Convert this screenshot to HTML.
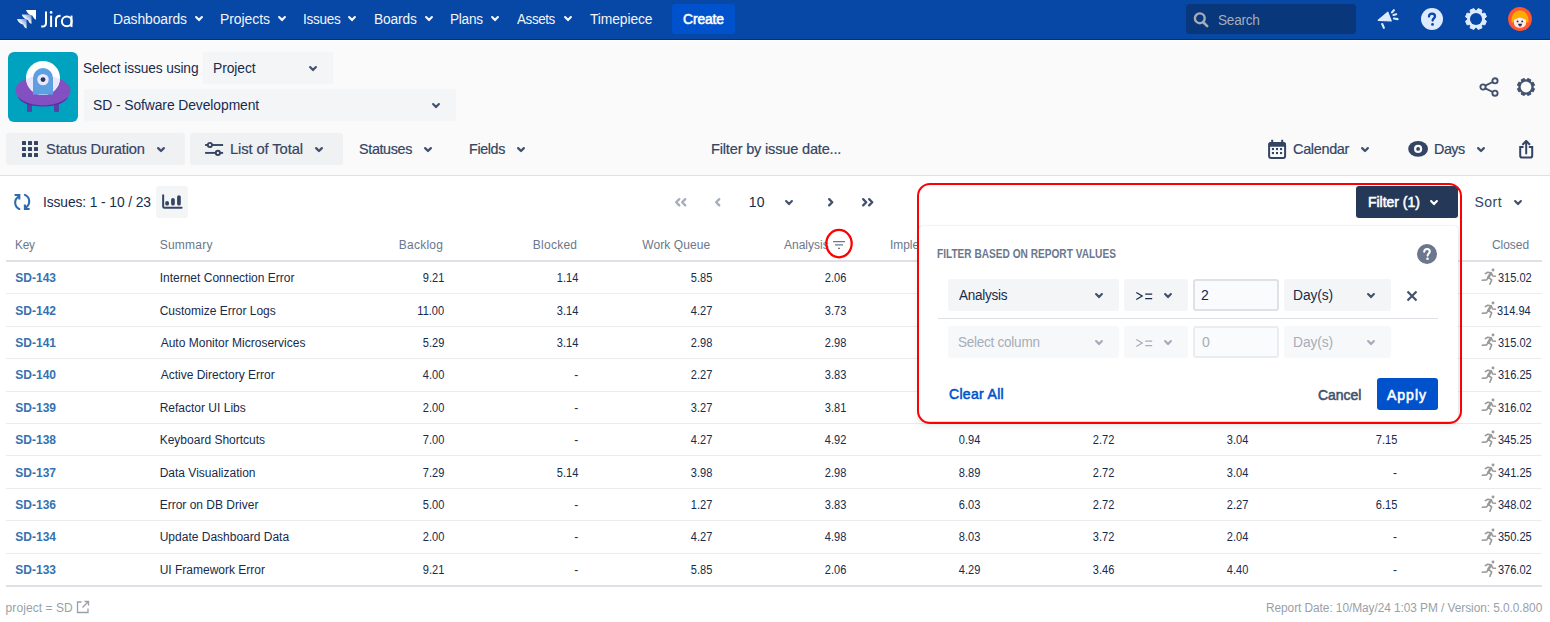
<!DOCTYPE html>
<html><head><meta charset="utf-8"><title>Jira - Status Duration</title>
<style>
html,body{margin:0;padding:0;width:1550px;height:622px;overflow:hidden;background:#fff;font-family:"Liberation Sans",sans-serif;}
.t{position:absolute;line-height:1;white-space:pre;font-family:"Liberation Sans",sans-serif;}
svg{display:block;overflow:visible}
</style></head><body>
<div style="position:absolute;left:0px;top:0px;width:1550px;height:622px;background:#FFFFFF;border-radius:0px;"></div>
<div style="position:absolute;left:0px;top:41px;width:1550px;height:134px;background:#FAFAFA;border-radius:0px;"></div>
<div style="position:absolute;left:0px;top:175px;width:1550px;height:1px;background:#DFE1E6;border-radius:0px;"></div>
<div style="position:absolute;left:0px;top:0px;width:1550px;height:39px;background:#0747A6;border-radius:0px;"></div>
<div style="position:absolute;left:0px;top:39px;width:1550px;height:1px;background:#1E2E4D;border-radius:0px;"></div>
<svg style="position:absolute;left:14px;top:6px;" width="26" height="26" viewBox="0 0 26 26"><defs><linearGradient id="jg" x1="0" y1="1" x2="1" y2="0"><stop offset="0.45" stop-color="#fff"/><stop offset="0.9" stop-color="#fff" stop-opacity="0.45"/></linearGradient></defs>
<path d="M12 4 H22 V13.8 C20.2 13 19 11.5 18.3 9.6 C15.8 9.2 13.2 7.4 12 4 Z" fill="#fff"/>
<path d="M7.7 8.6 H17.5 V18 C15.8 17.3 14.6 15.8 14 14 C11.5 13.6 8.9 11.9 7.7 8.6 Z" fill="url(#jg)"/>
<path d="M3 13 H12.6 V22.6 C10.9 21.9 9.7 20.4 9.1 18.5 C6.6 18.1 4.1 16.3 3 13 Z" fill="url(#jg)"/></svg>
<svg style="position:absolute;left:38px;top:8px;" width="38" height="22" viewBox="0 0 38 22"><g fill="none" stroke="#FFFFFF" stroke-width="2"><path d="M8 3.6 V14.8 C8 17.5 6.5 18.6 4.6 18.6 H3.2"/><path d="M13.1 7.6 V19"/><path d="M18 19 V11.6 C18 8.9 19.6 7.7 22.6 7.7"/><circle cx="28.8" cy="13.3" r="4.9"/><path d="M33.5 7.6 V19"/></g><circle cx="13.1" cy="4.4" r="1.35" fill="#FFFFFF"/></svg>
<div class="t" style="left:112.50px;top:12.10px;font-size:14px;color:#F4F5F7;transform-origin:1px 0;transform:scaleX(0.9899);letter-spacing:-0.084px;">Dashboards</div>
<svg style="position:absolute;left:194px;top:14.9px;" width="10" height="7.2" viewBox="0 0 10 7.2"><path d="M2.10 2.10 L5.00 5.10 L7.90 2.10" fill="none" stroke="#F4F5F7" stroke-width="2.2" stroke-linecap="round" stroke-linejoin="round"/></svg>
<div class="t" style="left:219.60px;top:12.10px;font-size:14px;color:#F4F5F7;transform-origin:1px 0;transform:scaleX(0.9939);letter-spacing:-0.043px;">Projects</div>
<svg style="position:absolute;left:276.8px;top:14.9px;" width="10" height="7.2" viewBox="0 0 10 7.2"><path d="M2.10 2.10 L5.00 5.10 L7.90 2.10" fill="none" stroke="#F4F5F7" stroke-width="2.2" stroke-linecap="round" stroke-linejoin="round"/></svg>
<div class="t" style="left:302.60px;top:12.10px;font-size:14px;color:#F4F5F7;transform-origin:1px 0;transform:scaleX(0.9667);letter-spacing:-0.269px;">Issues</div>
<svg style="position:absolute;left:347px;top:14.9px;" width="10" height="7.2" viewBox="0 0 10 7.2"><path d="M2.10 2.10 L5.00 5.10 L7.90 2.10" fill="none" stroke="#F4F5F7" stroke-width="2.2" stroke-linecap="round" stroke-linejoin="round"/></svg>
<div class="t" style="left:373.60px;top:12.10px;font-size:14px;color:#F4F5F7;transform-origin:1px 0;transform:scaleX(0.9814);letter-spacing:-0.163px;">Boards</div>
<svg style="position:absolute;left:423.5px;top:14.9px;" width="10" height="7.2" viewBox="0 0 10 7.2"><path d="M2.10 2.10 L5.00 5.10 L7.90 2.10" fill="none" stroke="#F4F5F7" stroke-width="2.2" stroke-linecap="round" stroke-linejoin="round"/></svg>
<div class="t" style="left:450.00px;top:12.10px;font-size:14px;color:#F4F5F7;transform-origin:1px 0;transform:scaleX(0.9706);letter-spacing:-0.258px;">Plans</div>
<svg style="position:absolute;left:490px;top:14.9px;" width="10" height="7.2" viewBox="0 0 10 7.2"><path d="M2.10 2.10 L5.00 5.10 L7.90 2.10" fill="none" stroke="#F4F5F7" stroke-width="2.2" stroke-linecap="round" stroke-linejoin="round"/></svg>
<div class="t" style="left:516.70px;top:12.10px;font-size:14px;color:#F4F5F7;transform-origin:0px 0;transform:scaleX(0.9560);letter-spacing:-0.387px;">Assets</div>
<svg style="position:absolute;left:562.5px;top:14.9px;" width="10" height="7.2" viewBox="0 0 10 7.2"><path d="M2.10 2.10 L5.00 5.10 L7.90 2.10" fill="none" stroke="#F4F5F7" stroke-width="2.2" stroke-linecap="round" stroke-linejoin="round"/></svg>
<div class="t" style="left:590.00px;top:12.10px;font-size:14px;color:#F4F5F7;transform-origin:0px 0;transform:scaleX(0.9883);letter-spacing:-0.095px;">Timepiece</div>
<div style="position:absolute;left:672px;top:4px;width:63px;height:30px;background:#0052CC;border-radius:3px;"></div>
<div class="t" style="left:683.00px;top:12.10px;font-size:14px;color:#FFFFFF;transform-origin:1px 0;transform:scaleX(0.9878);letter-spacing:-0.101px;-webkit-text-stroke:0.55px #FFFFFF;">Create</div>
<div style="position:absolute;left:1186px;top:4px;width:170px;height:30px;background:#08377C;border-radius:4px;"></div>
<svg style="position:absolute;left:1193px;top:11.5px;" width="16" height="16" viewBox="0 0 16 16"><circle cx="6.8" cy="6.3" r="4.9" fill="none" stroke="#A5ADBA" stroke-width="2.4"/><path d="M10 10 L14.2 14.2" stroke="#A5ADBA" stroke-width="2.6" stroke-linecap="round"/></svg>
<div class="t" style="left:1217.50px;top:13.10px;font-size:14px;color:#A5ADBA;transform-origin:1px 0;transform:scaleX(0.9709);letter-spacing:-0.257px;">Search</div>
<svg style="position:absolute;left:1376px;top:8px;" width="24" height="22" viewBox="0 0 24 22"><path d="M2.3 12.3 L11.8 4.3 L15.2 12.9 Z" fill="#DEEBFF" stroke="#DEEBFF" stroke-width="1.3" stroke-linejoin="round"/><path d="M6.2 16 L7.9 19.9" stroke="#DEEBFF" stroke-width="2.1" stroke-linecap="round"/><path d="M16 4.4 L17.9 2.2 M17.4 7 L20.2 6.3 M17.9 10.5 L21.6 11.1" stroke="#DEEBFF" stroke-width="2.1" stroke-linecap="round"/></svg>
<svg style="position:absolute;left:1421px;top:8px;" width="22" height="22" viewBox="0 0 22 22"><circle cx="11" cy="11" r="11" fill="#DEEBFF"/><path d="M8 8.6 C8 6.8 9.3 5.6 11 5.6 C12.8 5.6 14 6.7 14 8.3 C14 10.2 11.6 10.5 11.6 12.6" fill="none" stroke="#0747A6" stroke-width="2.3" stroke-linecap="round"/><circle cx="11.5" cy="16.4" r="1.4" fill="#0747A6"/></svg>
<svg style="position:absolute;left:1465px;top:7.7px;" width="22" height="22" viewBox="0 0 22 22"><path d="M21.45 13.15 L19.91 16.87 L17.55 16.55 L16.55 17.55 L16.87 19.91 L13.15 21.45 L11.71 19.55 L10.29 19.55 L8.85 21.45 L5.13 19.91 L5.45 17.55 L4.45 16.55 L2.09 16.87 L0.55 13.15 L2.45 11.71 L2.45 10.29 L0.55 8.85 L2.09 5.13 L4.45 5.45 L5.45 4.45 L5.13 2.09 L8.85 0.55 L10.29 2.45 L11.71 2.45 L13.15 0.55 L16.87 2.09 L16.55 4.45 L17.55 5.45 L19.91 5.13 L21.45 8.85 L19.55 10.29 L19.55 11.71 Z" fill="#DEEBFF" stroke="#DEEBFF" stroke-width="1" stroke-linejoin="round"/><circle cx="11.0" cy="11.0" r="6.05" fill="#0747A6"/></svg>
<svg style="position:absolute;left:1508px;top:7px;" width="24" height="24" viewBox="0 0 24 24"><circle cx="12" cy="12" r="11.9" fill="#FF5630"/><path d="M3.6 15.5 C2.8 8 6.5 3.6 12 3.6 C17.5 3.6 21.2 8 20.4 15.5 Z" fill="#FFAB00"/><path d="M6 12.8 C7.5 11.4 10 11.6 12 10.6 C14 11.6 16.5 11.4 18 12.8 L18 16.5 C17.6 19.4 15.2 20.9 12 20.9 C8.8 20.9 6.4 19.4 6 16.5 Z" fill="#FFEBE6"/><circle cx="9.6" cy="14.4" r="0.95" fill="#172B4D"/><circle cx="14.2" cy="14.4" r="0.95" fill="#172B4D"/><path d="M10.1 16.7 H14 C13.8 18.6 13 19.4 12.05 19.4 C11.1 19.4 10.3 18.6 10.1 16.7 Z" fill="#172B4D"/><path d="M10.8 18.4 H13.3 C13 19.1 12.6 19.4 12.05 19.4 C11.5 19.4 11.1 19.1 10.8 18.4 Z" fill="#DE350B"/></svg>
<svg style="position:absolute;left:8px;top:52px" width="70" height="70" viewBox="0 0 70 70">
<defs><clipPath id="sc"><ellipse cx="35" cy="38.5" rx="27.5" ry="15"/></clipPath></defs>
<rect width="70" height="70" rx="6" fill="#00A3BF"/>
<rect x="19" y="47" width="5" height="13" rx="1" fill="#5243AA"/><rect x="46" y="47" width="5" height="13" rx="1" fill="#5243AA"/>
<ellipse cx="35" cy="44" rx="25" ry="10.5" fill="#5E2CA5"/>
<ellipse cx="35" cy="38.5" rx="27.5" ry="15" fill="#8350C2"/>
<circle cx="35" cy="26" r="17" fill="#FFFFFF"/>
<circle cx="35" cy="26" r="17" fill="#EAE6FF" clip-path="url(#sc)"/>
<path d="M25 42.6 V26 A10 10 0 0 1 45 26 V42.6 Z" fill="#5DA0E2"/>
<circle cx="35" cy="27.6" r="5.7" fill="#EAE6FF"/><circle cx="35" cy="27.6" r="2.4" fill="#253858"/>
</svg>
<div class="t" style="left:83.30px;top:61.10px;font-size:14px;color:#172B4D;transform-origin:1px 0;transform:scaleX(0.9818);letter-spacing:-0.122px;">Select issues using</div>
<div style="position:absolute;left:203px;top:52px;width:130px;height:32px;background:#F4F5F7;border-radius:3px;"></div>
<div class="t" style="left:213.00px;top:61.10px;font-size:14px;color:#172B4D;transform-origin:1px 0;transform:scaleX(0.9884);letter-spacing:-0.084px;">Project</div>
<svg style="position:absolute;left:308px;top:65px;" width="10" height="7.2" viewBox="0 0 10 7.2"><path d="M2.10 2.10 L5.00 5.10 L7.90 2.10" fill="none" stroke="#42526E" stroke-width="2.2" stroke-linecap="round" stroke-linejoin="round"/></svg>
<div style="position:absolute;left:84px;top:89px;width:372px;height:32px;background:#F4F5F7;border-radius:3px;"></div>
<div class="t" style="left:93.40px;top:98.10px;font-size:14px;color:#172B4D;transform-origin:1px 0;transform:scaleX(0.9899);letter-spacing:-0.075px;">SD - Sofware Development</div>
<svg style="position:absolute;left:431px;top:102px;" width="10" height="7.2" viewBox="0 0 10 7.2"><path d="M2.10 2.10 L5.00 5.10 L7.90 2.10" fill="none" stroke="#42526E" stroke-width="2.2" stroke-linecap="round" stroke-linejoin="round"/></svg>
<svg style="position:absolute;left:1479px;top:77px;" width="21" height="20" viewBox="0 0 21 20"><circle cx="4" cy="10" r="2.6" fill="none" stroke="#42526E" stroke-width="1.9"/><circle cx="16" cy="3.8" r="2.6" fill="none" stroke="#42526E" stroke-width="1.9"/><circle cx="16" cy="16.2" r="2.6" fill="none" stroke="#42526E" stroke-width="1.9"/><path d="M6.3 8.7 L13.7 5 M6.3 11.3 L13.7 15" stroke="#42526E" stroke-width="1.9"/></svg>
<svg style="position:absolute;left:1516.5px;top:77.5px;" width="18" height="18" viewBox="0 0 18 18"><path d="M17.55 10.76 L16.29 13.80 L14.36 13.54 L13.54 14.36 L13.80 16.29 L10.76 17.55 L9.58 16.00 L8.42 16.00 L7.24 17.55 L4.20 16.29 L4.46 14.36 L3.64 13.54 L1.71 13.80 L0.45 10.76 L2.00 9.58 L2.00 8.42 L0.45 7.24 L1.71 4.20 L3.64 4.46 L4.46 3.64 L4.20 1.71 L7.24 0.45 L8.42 2.00 L9.58 2.00 L10.76 0.45 L13.80 1.71 L13.54 3.64 L14.36 4.46 L16.29 4.20 L17.55 7.24 L16.00 8.42 L16.00 9.58 Z" fill="#42526E" stroke="#42526E" stroke-width="1" stroke-linejoin="round"/><circle cx="9.0" cy="9.0" r="5.40" fill="#FAFAFA"/></svg>
<div style="position:absolute;left:6px;top:133px;width:179px;height:32px;background:#F0F1F3;border-radius:3px;"></div>
<svg style="position:absolute;left:22px;top:141px;" width="16" height="16" viewBox="0 0 16 16"><rect x="0" y="0" width="4" height="4" rx="0.6" fill="#344563"/><rect x="0" y="6" width="4" height="4" rx="0.6" fill="#344563"/><rect x="0" y="12" width="4" height="4" rx="0.6" fill="#344563"/><rect x="6" y="0" width="4" height="4" rx="0.6" fill="#344563"/><rect x="6" y="6" width="4" height="4" rx="0.6" fill="#344563"/><rect x="6" y="12" width="4" height="4" rx="0.6" fill="#344563"/><rect x="12" y="0" width="4" height="4" rx="0.6" fill="#344563"/><rect x="12" y="6" width="4" height="4" rx="0.6" fill="#344563"/><rect x="12" y="12" width="4" height="4" rx="0.6" fill="#344563"/></svg>
<div class="t" style="left:45.50px;top:141.25px;font-size:15px;color:#344563;transform-origin:1px 0;transform:scaleX(0.9779);letter-spacing:-0.164px;-webkit-text-stroke:0.2px #344563;">Status Duration</div>
<svg style="position:absolute;left:156px;top:146px;" width="10" height="7.2" viewBox="0 0 10 7.2"><path d="M2.15 2.15 L5.00 5.05 L7.85 2.15" fill="none" stroke="#42526E" stroke-width="2.3" stroke-linecap="round" stroke-linejoin="round"/></svg>
<div style="position:absolute;left:190px;top:133px;width:153px;height:32px;background:#F0F1F3;border-radius:3px;"></div>
<svg style="position:absolute;left:204px;top:141px;" width="20" height="16" viewBox="0 0 20 16"><path d="M1.1 4 H19.1" stroke="#344563" stroke-width="1.9"/><circle cx="5.9" cy="4" r="2.1" fill="#F0F1F4" stroke="#344563" stroke-width="1.9"/><path d="M1.1 11.9 H19.1" stroke="#344563" stroke-width="1.9"/><circle cx="13.9" cy="11.9" r="2.1" fill="#F0F1F4" stroke="#344563" stroke-width="1.9"/></svg>
<div class="t" style="left:229.60px;top:141.25px;font-size:15px;color:#344563;transform-origin:1px 0;transform:scaleX(0.9824);letter-spacing:-0.110px;-webkit-text-stroke:0.2px #344563;">List of Total</div>
<svg style="position:absolute;left:314px;top:146px;" width="10" height="7.2" viewBox="0 0 10 7.2"><path d="M2.15 2.15 L5.00 5.05 L7.85 2.15" fill="none" stroke="#42526E" stroke-width="2.3" stroke-linecap="round" stroke-linejoin="round"/></svg>
<div class="t" style="left:359.00px;top:141.25px;font-size:15px;color:#344563;transform-origin:1px 0;transform:scaleX(0.9561);letter-spacing:-0.374px;-webkit-text-stroke:0.2px #344563;">Statuses</div>
<svg style="position:absolute;left:423px;top:146px;" width="10" height="7.2" viewBox="0 0 10 7.2"><path d="M2.15 2.15 L5.00 5.05 L7.85 2.15" fill="none" stroke="#42526E" stroke-width="2.3" stroke-linecap="round" stroke-linejoin="round"/></svg>
<div class="t" style="left:468.70px;top:141.25px;font-size:15px;color:#344563;transform-origin:1px 0;transform:scaleX(0.9526);letter-spacing:-0.388px;-webkit-text-stroke:0.2px #344563;">Fields</div>
<svg style="position:absolute;left:516px;top:146px;" width="10" height="7.2" viewBox="0 0 10 7.2"><path d="M2.15 2.15 L5.00 5.05 L7.85 2.15" fill="none" stroke="#42526E" stroke-width="2.3" stroke-linecap="round" stroke-linejoin="round"/></svg>
<div class="t" style="left:711.00px;top:141.25px;font-size:15px;color:#344563;transform-origin:1px 0;transform:scaleX(0.9706);letter-spacing:-0.187px;-webkit-text-stroke:0.2px #344563;">Filter by issue date...</div>
<svg style="position:absolute;left:1267px;top:139px;" width="20" height="20" viewBox="0 0 20 20"><rect x="2.1" y="4" width="16" height="15" rx="2" fill="none" stroke="#344563" stroke-width="2"/><rect x="1.5" y="3.2" width="17.2" height="4.6" rx="1.5" fill="#344563"/><rect x="4.2" y="0.8" width="2" height="4" fill="#344563"/><rect x="14.2" y="0.8" width="2" height="4" fill="#344563"/><rect x="4.90" y="9.00" width="2.1" height="2.1" fill="#344563"/><rect x="4.90" y="13.00" width="2.1" height="2.1" fill="#344563"/><rect x="8.95" y="9.00" width="2.1" height="2.1" fill="#344563"/><rect x="8.95" y="13.00" width="2.1" height="2.1" fill="#344563"/><rect x="13.00" y="9.00" width="2.1" height="2.1" fill="#344563"/><rect x="13.00" y="13.00" width="2.1" height="2.1" fill="#344563"/></svg>
<div class="t" style="left:1292.50px;top:141.25px;font-size:15px;color:#344563;transform-origin:1px 0;transform:scaleX(0.9625);letter-spacing:-0.334px;-webkit-text-stroke:0.2px #344563;">Calendar</div>
<svg style="position:absolute;left:1360px;top:146px;" width="10" height="7.2" viewBox="0 0 10 7.2"><path d="M2.15 2.15 L5.00 5.05 L7.85 2.15" fill="none" stroke="#42526E" stroke-width="2.3" stroke-linecap="round" stroke-linejoin="round"/></svg>
<svg style="position:absolute;left:1407px;top:140px;" width="22" height="18" viewBox="0 0 22 18"><ellipse cx="11.1" cy="8.9" rx="9.9" ry="7.85" fill="#344563"/><circle cx="11.1" cy="8.9" r="4.1" fill="#FAFAFA"/><circle cx="11.1" cy="8.9" r="1.9" fill="#344563"/></svg>
<div class="t" style="left:1434.00px;top:141.25px;font-size:15px;color:#344563;transform-origin:1px 0;transform:scaleX(0.9545);letter-spacing:-0.524px;-webkit-text-stroke:0.2px #344563;">Days</div>
<svg style="position:absolute;left:1476px;top:146px;" width="10" height="7.2" viewBox="0 0 10 7.2"><path d="M2.15 2.15 L5.00 5.05 L7.85 2.15" fill="none" stroke="#42526E" stroke-width="2.3" stroke-linecap="round" stroke-linejoin="round"/></svg>
<svg style="position:absolute;left:1518px;top:139px;" width="16" height="20" viewBox="0 0 16 20"><path d="M4.8 8 H2.2 V16.8 Q2.2 18.6 4 18.6 H12.4 Q14.2 18.6 14.2 16.8 V8 H11.6" fill="none" stroke="#344563" stroke-width="2" stroke-linecap="round"/><path d="M8.2 14.4 V2.4" stroke="#344563" stroke-width="2" stroke-linecap="round"/><path d="M5 5.3 L8.2 2 L11.4 5.3" fill="none" stroke="#344563" stroke-width="2" stroke-linecap="round" stroke-linejoin="round"/></svg>
<svg style="position:absolute;left:8px;top:188px;" width="30" height="28" viewBox="0 0 30 28"><path d="M11.3 21 A7 7 0 0 1 10.6 8.6" fill="none" stroke="#2D6AAE" stroke-width="2.1" stroke-linecap="round"/><path d="M6.6 7 H11.3 V11.4" fill="none" stroke="#2D6AAE" stroke-width="2.1"/><path d="M16.9 6.9 A7 7 0 0 1 17.4 19.6" fill="none" stroke="#2D6AAE" stroke-width="2.1" stroke-linecap="round"/><path d="M16.9 16.4 V21 H21.6" fill="none" stroke="#2D6AAE" stroke-width="2.1"/></svg>
<div class="t" style="left:42.60px;top:195.10px;font-size:14px;color:#172B4D;transform-origin:1px 0;transform:scaleX(0.9850);letter-spacing:-0.093px;">Issues: 1 - 10 / 23</div>
<div style="position:absolute;left:156px;top:186px;width:32px;height:32px;background:#F4F5F7;border-radius:3px;"></div>
<svg style="position:absolute;left:162px;top:194px;" width="21" height="16" viewBox="0 0 21 16"><path d="M1.15 1.3 V12.4 Q1.15 13.7 2.45 13.7 H19.6" fill="none" stroke="#344563" stroke-width="2" stroke-linecap="round"/><rect x="3.2" y="7" width="3.8" height="4.6" rx="1.9" fill="#344563"/><rect x="9.1" y="4" width="3.7" height="7.6" rx="1.85" fill="#344563"/><rect x="15.1" y="1.2" width="3.7" height="10.4" rx="1.85" fill="#344563"/></svg>
<svg style="position:absolute;left:673.7px;top:196.8px;" width="7.4" height="10.5" viewBox="0 0 7.4 10.5"><path d="M5.25 2.15 L2.15 5.25 L5.25 8.35" fill="none" stroke="#A5ADBA" stroke-width="2.3" stroke-linecap="round" stroke-linejoin="round"/></svg>
<svg style="position:absolute;left:679.9px;top:196.8px;" width="7.4" height="10.5" viewBox="0 0 7.4 10.5"><path d="M5.25 2.15 L2.15 5.25 L5.25 8.35" fill="none" stroke="#A5ADBA" stroke-width="2.3" stroke-linecap="round" stroke-linejoin="round"/></svg>
<svg style="position:absolute;left:714px;top:196.8px;" width="7.4" height="10.5" viewBox="0 0 7.4 10.5"><path d="M5.25 2.15 L2.15 5.25 L5.25 8.35" fill="none" stroke="#A5ADBA" stroke-width="2.3" stroke-linecap="round" stroke-linejoin="round"/></svg>
<div class="t" style="left:748.80px;top:195.10px;font-size:14px;color:#172B4D;letter-spacing:0.200px;">10</div>
<svg style="position:absolute;left:784px;top:199px;" width="10" height="7.2" viewBox="0 0 10 7.2"><path d="M2.10 2.10 L5.00 5.10 L7.90 2.10" fill="none" stroke="#42526E" stroke-width="2.2" stroke-linecap="round" stroke-linejoin="round"/></svg>
<svg style="position:absolute;left:826.8px;top:196.8px;" width="7.4" height="10.5" viewBox="0 0 7.4 10.5"><path d="M2.15 2.15 L5.25 5.25 L2.15 8.35" fill="none" stroke="#42526E" stroke-width="2.3" stroke-linecap="round" stroke-linejoin="round"/></svg>
<svg style="position:absolute;left:861px;top:196.8px;" width="7.4" height="10.5" viewBox="0 0 7.4 10.5"><path d="M2.15 2.15 L5.25 5.25 L2.15 8.35" fill="none" stroke="#42526E" stroke-width="2.3" stroke-linecap="round" stroke-linejoin="round"/></svg>
<svg style="position:absolute;left:867.2px;top:196.8px;" width="7.4" height="10.5" viewBox="0 0 7.4 10.5"><path d="M2.15 2.15 L5.25 5.25 L2.15 8.35" fill="none" stroke="#42526E" stroke-width="2.3" stroke-linecap="round" stroke-linejoin="round"/></svg>
<div style="position:absolute;left:1356px;top:186px;width:102px;height:32px;background:#253858;border-radius:3px;"></div>
<div class="t" style="left:1367.50px;top:195.10px;font-size:14px;color:#FFFFFF;transform-origin:1px 0;transform:scaleX(0.9980);letter-spacing:-0.011px;-webkit-text-stroke:0.55px #FFFFFF;">Filter (1)</div>
<svg style="position:absolute;left:1429px;top:199px;" width="10" height="7.2" viewBox="0 0 10 7.2"><path d="M2.10 2.10 L5.00 5.10 L7.90 2.10" fill="none" stroke="#FFFFFF" stroke-width="2.2" stroke-linecap="round" stroke-linejoin="round"/></svg>
<div class="t" style="left:1474.50px;top:195.10px;font-size:14px;color:#344563;letter-spacing:0.500px;">Sort</div>
<svg style="position:absolute;left:1513px;top:199px;" width="10" height="7.2" viewBox="0 0 10 7.2"><path d="M2.10 2.10 L5.00 5.10 L7.90 2.10" fill="none" stroke="#42526E" stroke-width="2.2" stroke-linecap="round" stroke-linejoin="round"/></svg>
<div style="position:absolute;left:6px;top:260px;width:1536px;height:2px;background:#DFE1E6;border-radius:0px;"></div>
<div class="t" style="left:15.30px;top:238.80px;font-size:12px;color:#6B778C;transform-origin:1px 0;transform:scaleX(0.9825);letter-spacing:-0.178px;">Key</div>
<div class="t" style="left:159.70px;top:238.80px;font-size:12px;color:#6B778C;letter-spacing:0.250px;">Summary</div>
<div class="t" style="left:398.80px;top:238.80px;font-size:12px;color:#6B778C;letter-spacing:0.233px;">Backlog</div>
<div class="t" style="left:532.80px;top:238.80px;font-size:12px;color:#6B778C;letter-spacing:0.250px;">Blocked</div>
<div class="t" style="left:642.30px;top:238.80px;font-size:12px;color:#6B778C;letter-spacing:0.078px;">Work Queue</div>
<div class="t" style="left:784.00px;top:238.80px;font-size:12px;color:#6B778C;">Analysis</div>
<div class="t" style="left:890.00px;top:238.80px;font-size:12px;color:#6B778C;transform-origin:1px 0;transform:scaleX(0.9938);letter-spacing:-0.039px;">Implementation</div>
<div class="t" style="left:1492.00px;top:238.80px;font-size:12px;color:#6B778C;transform-origin:1px 0;transform:scaleX(0.9958);letter-spacing:-0.030px;">Closed</div>
<svg style="position:absolute;left:832px;top:239px;" width="13" height="11" viewBox="0 0 13 11"><path d="M1 2.6 H13 M3 5.8 H11 M6 9.3 H8" stroke="#6B778C" stroke-width="1.3"/></svg>
<svg style="position:absolute;left:824px;top:229px;" width="30" height="30" viewBox="0 0 30 30"><ellipse cx="15" cy="14.6" rx="12.7" ry="13.7" fill="none" stroke="#FF0000" stroke-width="2.3"/></svg>
<div style="position:absolute;left:6px;top:293px;width:1536px;height:1px;background:#EBECF0;border-radius:0px;"></div>
<div class="t" style="left:15.30px;top:272.10px;font-size:12px;color:#3572B0;font-weight:700;">SD-143</div>
<div class="t" style="left:159.70px;top:272.10px;font-size:12px;color:#172B4D;">Internet Connection Error</div>
<div class="t" style="left:420.60px;top:272.10px;font-size:12px;color:#172B4D;transform-origin:100% 0;transform:scaleX(0.92);">9.21</div>
<div class="t" style="left:555.30px;top:272.10px;font-size:12px;color:#172B4D;transform-origin:100% 0;transform:scaleX(0.92);">1.14</div>
<div class="t" style="left:689.20px;top:272.10px;font-size:12px;color:#172B4D;transform-origin:100% 0;transform:scaleX(0.92);">5.85</div>
<div class="t" style="left:823.10px;top:272.10px;font-size:12px;color:#172B4D;transform-origin:100% 0;transform:scaleX(0.92);">2.06</div>
<div class="t" style="left:1495.20px;top:272.10px;font-size:12px;color:#172B4D;transform-origin:100% 0;transform:scaleX(0.92);">315.02</div>
<svg style="position:absolute;left:1476px;top:264px;" width="24" height="26" viewBox="0 0 24 26"><circle cx="17" cy="6" r="1.45" fill="#9A9A9A"/><path d="M9.3 9.6 L11.7 8.2 L15 8.8 M15.6 9.9 L16.8 12 L19.4 12.3 M12.3 13.5 L10.5 15.9 L6.3 16.3 M12.5 13.5 L15.7 15.9 L13.9 20.2" fill="none" stroke="#9A9A9A" stroke-width="1.6" stroke-linecap="round" stroke-linejoin="round"/><path d="M15 9.3 L12.3 13.4" stroke="#9A9A9A" stroke-width="2.6" stroke-linecap="round"/></svg>
<div style="position:absolute;left:6px;top:326px;width:1536px;height:1px;background:#EBECF0;border-radius:0px;"></div>
<div class="t" style="left:15.30px;top:304.50px;font-size:12px;color:#3572B0;font-weight:700;">SD-142</div>
<div class="t" style="left:159.70px;top:304.50px;font-size:12px;color:#172B4D;">Customize Error Logs</div>
<div class="t" style="left:414.60px;top:304.50px;font-size:12px;color:#172B4D;transform-origin:100% 0;transform:scaleX(0.92);">11.00</div>
<div class="t" style="left:555.30px;top:304.50px;font-size:12px;color:#172B4D;transform-origin:100% 0;transform:scaleX(0.92);">3.14</div>
<div class="t" style="left:689.20px;top:304.50px;font-size:12px;color:#172B4D;transform-origin:100% 0;transform:scaleX(0.92);">4.27</div>
<div class="t" style="left:823.10px;top:304.50px;font-size:12px;color:#172B4D;transform-origin:100% 0;transform:scaleX(0.92);">3.73</div>
<div class="t" style="left:1494.20px;top:304.50px;font-size:12px;color:#172B4D;transform-origin:100% 0;transform:scaleX(0.92);">314.94</div>
<svg style="position:absolute;left:1476px;top:297px;" width="24" height="26" viewBox="0 0 24 26"><circle cx="17" cy="6" r="1.45" fill="#9A9A9A"/><path d="M9.3 9.6 L11.7 8.2 L15 8.8 M15.6 9.9 L16.8 12 L19.4 12.3 M12.3 13.5 L10.5 15.9 L6.3 16.3 M12.5 13.5 L15.7 15.9 L13.9 20.2" fill="none" stroke="#9A9A9A" stroke-width="1.6" stroke-linecap="round" stroke-linejoin="round"/><path d="M15 9.3 L12.3 13.4" stroke="#9A9A9A" stroke-width="2.6" stroke-linecap="round"/></svg>
<div style="position:absolute;left:6px;top:358px;width:1536px;height:1px;background:#EBECF0;border-radius:0px;"></div>
<div class="t" style="left:15.30px;top:336.90px;font-size:12px;color:#3572B0;font-weight:700;">SD-141</div>
<div class="t" style="left:160.70px;top:336.90px;font-size:12px;color:#172B4D;">Auto Monitor Microservices</div>
<div class="t" style="left:420.60px;top:336.90px;font-size:12px;color:#172B4D;transform-origin:100% 0;transform:scaleX(0.92);">5.29</div>
<div class="t" style="left:555.30px;top:336.90px;font-size:12px;color:#172B4D;transform-origin:100% 0;transform:scaleX(0.92);">3.14</div>
<div class="t" style="left:689.20px;top:336.90px;font-size:12px;color:#172B4D;transform-origin:100% 0;transform:scaleX(0.92);">2.98</div>
<div class="t" style="left:823.10px;top:336.90px;font-size:12px;color:#172B4D;transform-origin:100% 0;transform:scaleX(0.92);">2.98</div>
<div class="t" style="left:1495.20px;top:336.90px;font-size:12px;color:#172B4D;transform-origin:100% 0;transform:scaleX(0.92);">315.02</div>
<svg style="position:absolute;left:1476px;top:329px;" width="24" height="26" viewBox="0 0 24 26"><circle cx="17" cy="6" r="1.45" fill="#9A9A9A"/><path d="M9.3 9.6 L11.7 8.2 L15 8.8 M15.6 9.9 L16.8 12 L19.4 12.3 M12.3 13.5 L10.5 15.9 L6.3 16.3 M12.5 13.5 L15.7 15.9 L13.9 20.2" fill="none" stroke="#9A9A9A" stroke-width="1.6" stroke-linecap="round" stroke-linejoin="round"/><path d="M15 9.3 L12.3 13.4" stroke="#9A9A9A" stroke-width="2.6" stroke-linecap="round"/></svg>
<div style="position:absolute;left:6px;top:391px;width:1536px;height:1px;background:#EBECF0;border-radius:0px;"></div>
<div class="t" style="left:15.30px;top:369.30px;font-size:12px;color:#3572B0;font-weight:700;">SD-140</div>
<div class="t" style="left:160.70px;top:369.30px;font-size:12px;color:#172B4D;">Active Directory Error</div>
<div class="t" style="left:420.60px;top:369.30px;font-size:12px;color:#172B4D;transform-origin:100% 0;transform:scaleX(0.92);">4.00</div>
<div class="t" style="left:574.30px;top:369.30px;font-size:12px;color:#172B4D;">-</div>
<div class="t" style="left:689.20px;top:369.30px;font-size:12px;color:#172B4D;transform-origin:100% 0;transform:scaleX(0.92);">2.27</div>
<div class="t" style="left:823.10px;top:369.30px;font-size:12px;color:#172B4D;transform-origin:100% 0;transform:scaleX(0.92);">3.83</div>
<div class="t" style="left:1495.20px;top:369.30px;font-size:12px;color:#172B4D;transform-origin:100% 0;transform:scaleX(0.92);">316.25</div>
<svg style="position:absolute;left:1476px;top:362px;" width="24" height="26" viewBox="0 0 24 26"><circle cx="17" cy="6" r="1.45" fill="#9A9A9A"/><path d="M9.3 9.6 L11.7 8.2 L15 8.8 M15.6 9.9 L16.8 12 L19.4 12.3 M12.3 13.5 L10.5 15.9 L6.3 16.3 M12.5 13.5 L15.7 15.9 L13.9 20.2" fill="none" stroke="#9A9A9A" stroke-width="1.6" stroke-linecap="round" stroke-linejoin="round"/><path d="M15 9.3 L12.3 13.4" stroke="#9A9A9A" stroke-width="2.6" stroke-linecap="round"/></svg>
<div style="position:absolute;left:6px;top:423px;width:1536px;height:1px;background:#EBECF0;border-radius:0px;"></div>
<div class="t" style="left:15.30px;top:401.70px;font-size:12px;color:#3572B0;font-weight:700;">SD-139</div>
<div class="t" style="left:159.70px;top:401.70px;font-size:12px;color:#172B4D;">Refactor UI Libs</div>
<div class="t" style="left:420.60px;top:401.70px;font-size:12px;color:#172B4D;transform-origin:100% 0;transform:scaleX(0.92);">2.00</div>
<div class="t" style="left:574.30px;top:401.70px;font-size:12px;color:#172B4D;">-</div>
<div class="t" style="left:689.20px;top:401.70px;font-size:12px;color:#172B4D;transform-origin:100% 0;transform:scaleX(0.92);">3.27</div>
<div class="t" style="left:823.10px;top:401.70px;font-size:12px;color:#172B4D;transform-origin:100% 0;transform:scaleX(0.92);">3.81</div>
<div class="t" style="left:1495.20px;top:401.70px;font-size:12px;color:#172B4D;transform-origin:100% 0;transform:scaleX(0.92);">316.02</div>
<svg style="position:absolute;left:1476px;top:394px;" width="24" height="26" viewBox="0 0 24 26"><circle cx="17" cy="6" r="1.45" fill="#9A9A9A"/><path d="M9.3 9.6 L11.7 8.2 L15 8.8 M15.6 9.9 L16.8 12 L19.4 12.3 M12.3 13.5 L10.5 15.9 L6.3 16.3 M12.5 13.5 L15.7 15.9 L13.9 20.2" fill="none" stroke="#9A9A9A" stroke-width="1.6" stroke-linecap="round" stroke-linejoin="round"/><path d="M15 9.3 L12.3 13.4" stroke="#9A9A9A" stroke-width="2.6" stroke-linecap="round"/></svg>
<div style="position:absolute;left:6px;top:455px;width:1536px;height:1px;background:#EBECF0;border-radius:0px;"></div>
<div class="t" style="left:15.30px;top:434.10px;font-size:12px;color:#3572B0;font-weight:700;">SD-138</div>
<div class="t" style="left:159.70px;top:434.10px;font-size:12px;color:#172B4D;">Keyboard Shortcuts</div>
<div class="t" style="left:420.60px;top:434.10px;font-size:12px;color:#172B4D;transform-origin:100% 0;transform:scaleX(0.92);">7.00</div>
<div class="t" style="left:574.30px;top:434.10px;font-size:12px;color:#172B4D;">-</div>
<div class="t" style="left:689.20px;top:434.10px;font-size:12px;color:#172B4D;transform-origin:100% 0;transform:scaleX(0.92);">4.27</div>
<div class="t" style="left:823.10px;top:434.10px;font-size:12px;color:#172B4D;transform-origin:100% 0;transform:scaleX(0.92);">4.92</div>
<div class="t" style="left:957.30px;top:434.10px;font-size:12px;color:#172B4D;transform-origin:100% 0;transform:scaleX(0.92);">0.94</div>
<div class="t" style="left:1090.80px;top:434.10px;font-size:12px;color:#172B4D;transform-origin:100% 0;transform:scaleX(0.92);">2.72</div>
<div class="t" style="left:1225.30px;top:434.10px;font-size:12px;color:#172B4D;transform-origin:100% 0;transform:scaleX(0.92);">3.04</div>
<div class="t" style="left:1373.90px;top:434.10px;font-size:12px;color:#172B4D;transform-origin:100% 0;transform:scaleX(0.92);">7.15</div>
<div class="t" style="left:1495.20px;top:434.10px;font-size:12px;color:#172B4D;transform-origin:100% 0;transform:scaleX(0.92);">345.25</div>
<svg style="position:absolute;left:1476px;top:426px;" width="24" height="26" viewBox="0 0 24 26"><circle cx="17" cy="6" r="1.45" fill="#9A9A9A"/><path d="M9.3 9.6 L11.7 8.2 L15 8.8 M15.6 9.9 L16.8 12 L19.4 12.3 M12.3 13.5 L10.5 15.9 L6.3 16.3 M12.5 13.5 L15.7 15.9 L13.9 20.2" fill="none" stroke="#9A9A9A" stroke-width="1.6" stroke-linecap="round" stroke-linejoin="round"/><path d="M15 9.3 L12.3 13.4" stroke="#9A9A9A" stroke-width="2.6" stroke-linecap="round"/></svg>
<div style="position:absolute;left:6px;top:488px;width:1536px;height:1px;background:#EBECF0;border-radius:0px;"></div>
<div class="t" style="left:15.30px;top:466.50px;font-size:12px;color:#3572B0;font-weight:700;">SD-137</div>
<div class="t" style="left:159.70px;top:466.50px;font-size:12px;color:#172B4D;">Data Visualization</div>
<div class="t" style="left:420.60px;top:466.50px;font-size:12px;color:#172B4D;transform-origin:100% 0;transform:scaleX(0.92);">7.29</div>
<div class="t" style="left:555.30px;top:466.50px;font-size:12px;color:#172B4D;transform-origin:100% 0;transform:scaleX(0.92);">5.14</div>
<div class="t" style="left:689.20px;top:466.50px;font-size:12px;color:#172B4D;transform-origin:100% 0;transform:scaleX(0.92);">3.98</div>
<div class="t" style="left:823.10px;top:466.50px;font-size:12px;color:#172B4D;transform-origin:100% 0;transform:scaleX(0.92);">2.98</div>
<div class="t" style="left:957.30px;top:466.50px;font-size:12px;color:#172B4D;transform-origin:100% 0;transform:scaleX(0.92);">8.89</div>
<div class="t" style="left:1090.80px;top:466.50px;font-size:12px;color:#172B4D;transform-origin:100% 0;transform:scaleX(0.92);">2.72</div>
<div class="t" style="left:1225.30px;top:466.50px;font-size:12px;color:#172B4D;transform-origin:100% 0;transform:scaleX(0.92);">3.04</div>
<div class="t" style="left:1392.90px;top:466.50px;font-size:12px;color:#172B4D;">-</div>
<div class="t" style="left:1495.20px;top:466.50px;font-size:12px;color:#172B4D;transform-origin:100% 0;transform:scaleX(0.92);">341.25</div>
<svg style="position:absolute;left:1476px;top:459px;" width="24" height="26" viewBox="0 0 24 26"><circle cx="17" cy="6" r="1.45" fill="#9A9A9A"/><path d="M9.3 9.6 L11.7 8.2 L15 8.8 M15.6 9.9 L16.8 12 L19.4 12.3 M12.3 13.5 L10.5 15.9 L6.3 16.3 M12.5 13.5 L15.7 15.9 L13.9 20.2" fill="none" stroke="#9A9A9A" stroke-width="1.6" stroke-linecap="round" stroke-linejoin="round"/><path d="M15 9.3 L12.3 13.4" stroke="#9A9A9A" stroke-width="2.6" stroke-linecap="round"/></svg>
<div style="position:absolute;left:6px;top:520px;width:1536px;height:1px;background:#EBECF0;border-radius:0px;"></div>
<div class="t" style="left:15.30px;top:498.90px;font-size:12px;color:#3572B0;font-weight:700;">SD-136</div>
<div class="t" style="left:159.70px;top:498.90px;font-size:12px;color:#172B4D;">Error on DB Driver</div>
<div class="t" style="left:420.60px;top:498.90px;font-size:12px;color:#172B4D;transform-origin:100% 0;transform:scaleX(0.92);">5.00</div>
<div class="t" style="left:574.30px;top:498.90px;font-size:12px;color:#172B4D;">-</div>
<div class="t" style="left:689.20px;top:498.90px;font-size:12px;color:#172B4D;transform-origin:100% 0;transform:scaleX(0.92);">1.27</div>
<div class="t" style="left:823.10px;top:498.90px;font-size:12px;color:#172B4D;transform-origin:100% 0;transform:scaleX(0.92);">3.83</div>
<div class="t" style="left:957.30px;top:498.90px;font-size:12px;color:#172B4D;transform-origin:100% 0;transform:scaleX(0.92);">6.03</div>
<div class="t" style="left:1090.80px;top:498.90px;font-size:12px;color:#172B4D;transform-origin:100% 0;transform:scaleX(0.92);">2.72</div>
<div class="t" style="left:1225.30px;top:498.90px;font-size:12px;color:#172B4D;transform-origin:100% 0;transform:scaleX(0.92);">2.27</div>
<div class="t" style="left:1373.90px;top:498.90px;font-size:12px;color:#172B4D;transform-origin:100% 0;transform:scaleX(0.92);">6.15</div>
<div class="t" style="left:1495.20px;top:498.90px;font-size:12px;color:#172B4D;transform-origin:100% 0;transform:scaleX(0.92);">348.02</div>
<svg style="position:absolute;left:1476px;top:491px;" width="24" height="26" viewBox="0 0 24 26"><circle cx="17" cy="6" r="1.45" fill="#9A9A9A"/><path d="M9.3 9.6 L11.7 8.2 L15 8.8 M15.6 9.9 L16.8 12 L19.4 12.3 M12.3 13.5 L10.5 15.9 L6.3 16.3 M12.5 13.5 L15.7 15.9 L13.9 20.2" fill="none" stroke="#9A9A9A" stroke-width="1.6" stroke-linecap="round" stroke-linejoin="round"/><path d="M15 9.3 L12.3 13.4" stroke="#9A9A9A" stroke-width="2.6" stroke-linecap="round"/></svg>
<div style="position:absolute;left:6px;top:553px;width:1536px;height:1px;background:#EBECF0;border-radius:0px;"></div>
<div class="t" style="left:15.30px;top:531.30px;font-size:12px;color:#3572B0;font-weight:700;">SD-134</div>
<div class="t" style="left:159.70px;top:531.30px;font-size:12px;color:#172B4D;">Update Dashboard Data</div>
<div class="t" style="left:420.60px;top:531.30px;font-size:12px;color:#172B4D;transform-origin:100% 0;transform:scaleX(0.92);">2.00</div>
<div class="t" style="left:574.30px;top:531.30px;font-size:12px;color:#172B4D;">-</div>
<div class="t" style="left:689.20px;top:531.30px;font-size:12px;color:#172B4D;transform-origin:100% 0;transform:scaleX(0.92);">4.27</div>
<div class="t" style="left:823.10px;top:531.30px;font-size:12px;color:#172B4D;transform-origin:100% 0;transform:scaleX(0.92);">4.98</div>
<div class="t" style="left:957.30px;top:531.30px;font-size:12px;color:#172B4D;transform-origin:100% 0;transform:scaleX(0.92);">8.03</div>
<div class="t" style="left:1090.80px;top:531.30px;font-size:12px;color:#172B4D;transform-origin:100% 0;transform:scaleX(0.92);">3.72</div>
<div class="t" style="left:1225.30px;top:531.30px;font-size:12px;color:#172B4D;transform-origin:100% 0;transform:scaleX(0.92);">2.04</div>
<div class="t" style="left:1392.90px;top:531.30px;font-size:12px;color:#172B4D;">-</div>
<div class="t" style="left:1495.20px;top:531.30px;font-size:12px;color:#172B4D;transform-origin:100% 0;transform:scaleX(0.92);">350.25</div>
<svg style="position:absolute;left:1476px;top:524px;" width="24" height="26" viewBox="0 0 24 26"><circle cx="17" cy="6" r="1.45" fill="#9A9A9A"/><path d="M9.3 9.6 L11.7 8.2 L15 8.8 M15.6 9.9 L16.8 12 L19.4 12.3 M12.3 13.5 L10.5 15.9 L6.3 16.3 M12.5 13.5 L15.7 15.9 L13.9 20.2" fill="none" stroke="#9A9A9A" stroke-width="1.6" stroke-linecap="round" stroke-linejoin="round"/><path d="M15 9.3 L12.3 13.4" stroke="#9A9A9A" stroke-width="2.6" stroke-linecap="round"/></svg>
<div class="t" style="left:15.30px;top:563.70px;font-size:12px;color:#3572B0;font-weight:700;">SD-133</div>
<div class="t" style="left:159.70px;top:563.70px;font-size:12px;color:#172B4D;">UI Framework Error</div>
<div class="t" style="left:420.60px;top:563.70px;font-size:12px;color:#172B4D;transform-origin:100% 0;transform:scaleX(0.92);">9.21</div>
<div class="t" style="left:574.30px;top:563.70px;font-size:12px;color:#172B4D;">-</div>
<div class="t" style="left:689.20px;top:563.70px;font-size:12px;color:#172B4D;transform-origin:100% 0;transform:scaleX(0.92);">5.85</div>
<div class="t" style="left:823.10px;top:563.70px;font-size:12px;color:#172B4D;transform-origin:100% 0;transform:scaleX(0.92);">2.06</div>
<div class="t" style="left:957.30px;top:563.70px;font-size:12px;color:#172B4D;transform-origin:100% 0;transform:scaleX(0.92);">4.29</div>
<div class="t" style="left:1090.80px;top:563.70px;font-size:12px;color:#172B4D;transform-origin:100% 0;transform:scaleX(0.92);">3.46</div>
<div class="t" style="left:1225.30px;top:563.70px;font-size:12px;color:#172B4D;transform-origin:100% 0;transform:scaleX(0.92);">4.40</div>
<div class="t" style="left:1392.90px;top:563.70px;font-size:12px;color:#172B4D;">-</div>
<div class="t" style="left:1495.20px;top:563.70px;font-size:12px;color:#172B4D;transform-origin:100% 0;transform:scaleX(0.92);">376.02</div>
<svg style="position:absolute;left:1476px;top:556px;" width="24" height="26" viewBox="0 0 24 26"><circle cx="17" cy="6" r="1.45" fill="#9A9A9A"/><path d="M9.3 9.6 L11.7 8.2 L15 8.8 M15.6 9.9 L16.8 12 L19.4 12.3 M12.3 13.5 L10.5 15.9 L6.3 16.3 M12.5 13.5 L15.7 15.9 L13.9 20.2" fill="none" stroke="#9A9A9A" stroke-width="1.6" stroke-linecap="round" stroke-linejoin="round"/><path d="M15 9.3 L12.3 13.4" stroke="#9A9A9A" stroke-width="2.6" stroke-linecap="round"/></svg>
<div style="position:absolute;left:6px;top:585px;width:1536px;height:2px;background:#DFE1E6;border-radius:0px;"></div>
<div class="t" style="left:5.60px;top:601.80px;font-size:12px;color:#999FA8;letter-spacing:0.073px;">project = SD</div>
<svg style="position:absolute;left:76px;top:600px;" width="14" height="14" viewBox="0 0 14 14"><path d="M5.5 2 H1.5 V12.5 H12 V8.5" fill="none" stroke="#999FA8" stroke-width="1.3"/><path d="M6.5 7.5 L12.5 1.5 M8.5 1.5 H12.5 V5.5" fill="none" stroke="#999FA8" stroke-width="1.3"/></svg>
<div class="t" style="left:1265.50px;top:601.80px;font-size:12px;color:#999FA8;transform-origin:1px 0;transform:scaleX(0.9895);letter-spacing:-0.060px;">Report Date: 10/May/24 1:03 PM / Version: 5.0.0.800</div>
<div style="position:absolute;left:919px;top:185px;width:539px;height:41px;background:#FFFFFF;border-radius:0px;"></div>
<div style="position:absolute;left:1356px;top:186px;width:102px;height:32px;background:#253858;border-radius:3px;"></div>
<div class="t" style="left:1367.50px;top:195.10px;font-size:14px;color:#FFFFFF;transform-origin:1px 0;transform:scaleX(0.9980);letter-spacing:-0.011px;-webkit-text-stroke:0.55px #FFFFFF;">Filter (1)</div>
<svg style="position:absolute;left:1429px;top:199px;" width="10" height="7.2" viewBox="0 0 10 7.2"><path d="M2.10 2.10 L5.00 5.10 L7.90 2.10" fill="none" stroke="#FFFFFF" stroke-width="2.2" stroke-linecap="round" stroke-linejoin="round"/></svg>
<div style="position:absolute;left:919px;top:226px;width:539px;height:195px;background:#FFFFFF;border-radius:3px;box-shadow:0 4px 10px -2px rgba(9,30,66,0.18),0 0 1px rgba(9,30,66,0.35);"></div>
<div class="t" style="left:937.20px;top:248.10px;font-size:12px;color:#6B778C;font-weight:700;transform-origin:0 0;transform:scaleX(0.843);">FILTER BASED ON REPORT VALUES</div>
<svg style="position:absolute;left:1417px;top:244px;" width="20" height="20" viewBox="0 0 20 20"><circle cx="10" cy="10" r="10" fill="#6B778C"/><path d="M7.2 7.8 C7.2 6 8.4 5 10 5 C11.7 5 12.8 6 12.8 7.5 C12.8 9.3 10.6 9.6 10.6 11.6" fill="none" stroke="#fff" stroke-width="2.1" stroke-linecap="round"/><circle cx="10.5" cy="14.8" r="1.3" fill="#fff"/></svg>
<div style="position:absolute;left:948px;top:279px;width:171px;height:32px;background:#F4F5F7;border-radius:3px;"></div>
<div class="t" style="left:958.50px;top:288.10px;font-size:14px;color:#172B4D;transform-origin:0px 0;transform:scaleX(0.9663);letter-spacing:-0.259px;">Analysis</div>
<svg style="position:absolute;left:1094px;top:291.5px;" width="10" height="7.2" viewBox="0 0 10 7.2"><path d="M2.10 2.10 L5.00 5.10 L7.90 2.10" fill="none" stroke="#42526E" stroke-width="2.2" stroke-linecap="round" stroke-linejoin="round"/></svg>
<div style="position:absolute;left:1124px;top:279px;width:64px;height:32px;background:#F4F5F7;border-radius:3px;"></div>
<svg style="position:absolute;left:1135px;top:290px;" width="18" height="12" viewBox="0 0 18 12"><path d="M1.3 2.5 L7.2 6 L1.3 9.5" fill="none" stroke="#172B4D" stroke-width="1.25"/><path d="M10.2 4.1 H17.2 M10.2 8.7 H17.2" stroke="#172B4D" stroke-width="1.3"/></svg>
<svg style="position:absolute;left:1163px;top:291.5px;" width="10" height="7.2" viewBox="0 0 10 7.2"><path d="M2.10 2.10 L5.00 5.10 L7.90 2.10" fill="none" stroke="#42526E" stroke-width="2.2" stroke-linecap="round" stroke-linejoin="round"/></svg>
<div style="position:absolute;left:1193px;top:279px;width:86px;height:32px;background:#FAFBFC;border-radius:3px;box-sizing:border-box;border:2px solid #DFE1E6;"></div>
<div class="t" style="left:1201.00px;top:288.10px;font-size:14px;color:#172B4D;">2</div>
<div style="position:absolute;left:1284px;top:279px;width:107px;height:32px;background:#F4F5F7;border-radius:3px;"></div>
<div class="t" style="left:1293.00px;top:288.10px;font-size:14px;color:#172B4D;transform-origin:1px 0;transform:scaleX(0.9872);letter-spacing:-0.101px;">Day(s)</div>
<svg style="position:absolute;left:1365.5px;top:291.5px;" width="10" height="7.2" viewBox="0 0 10 7.2"><path d="M2.10 2.10 L5.00 5.10 L7.90 2.10" fill="none" stroke="#42526E" stroke-width="2.2" stroke-linecap="round" stroke-linejoin="round"/></svg>
<svg style="position:absolute;left:1406px;top:290px;" width="12" height="12" viewBox="0 0 12 12"><path d="M1.5 1.5 L10.5 10.5 M10.5 1.5 L1.5 10.5" stroke="#42526E" stroke-width="2.2"/></svg>
<div style="position:absolute;left:938px;top:318px;width:500px;height:1px;background:#DFE1E6;border-radius:0px;"></div>
<div style="position:absolute;left:948px;top:326px;width:171px;height:32px;background:#F7F8F9;border-radius:3px;"></div>
<div class="t" style="left:957.50px;top:335.10px;font-size:14px;color:#A5ADBA;transform-origin:1px 0;transform:scaleX(0.9651);letter-spacing:-0.259px;">Select column</div>
<svg style="position:absolute;left:1094px;top:338.5px;" width="10" height="7.2" viewBox="0 0 10 7.2"><path d="M2.10 2.10 L5.00 5.10 L7.90 2.10" fill="none" stroke="#A5ADBA" stroke-width="2.2" stroke-linecap="round" stroke-linejoin="round"/></svg>
<div style="position:absolute;left:1124px;top:326px;width:64px;height:32px;background:#F7F8F9;border-radius:3px;"></div>
<svg style="position:absolute;left:1135px;top:337px;" width="18" height="12" viewBox="0 0 18 12"><path d="M1.3 2.5 L7.2 6 L1.3 9.5" fill="none" stroke="#A5ADBA" stroke-width="1.25"/><path d="M10.2 4.1 H17.2 M10.2 8.7 H17.2" stroke="#A5ADBA" stroke-width="1.3"/></svg>
<svg style="position:absolute;left:1163px;top:338.5px;" width="10" height="7.2" viewBox="0 0 10 7.2"><path d="M2.10 2.10 L5.00 5.10 L7.90 2.10" fill="none" stroke="#A5ADBA" stroke-width="2.2" stroke-linecap="round" stroke-linejoin="round"/></svg>
<div style="position:absolute;left:1193px;top:326px;width:86px;height:32px;background:#FAFBFC;border-radius:3px;box-sizing:border-box;border:2px solid #EBECF0;"></div>
<div class="t" style="left:1202.00px;top:335.10px;font-size:14px;color:#A5ADBA;">0</div>
<div style="position:absolute;left:1284px;top:326px;width:107px;height:32px;background:#F7F8F9;border-radius:3px;"></div>
<div class="t" style="left:1293.00px;top:335.10px;font-size:14px;color:#A5ADBA;transform-origin:1px 0;transform:scaleX(0.9872);letter-spacing:-0.101px;">Day(s)</div>
<svg style="position:absolute;left:1365.5px;top:338.5px;" width="10" height="7.2" viewBox="0 0 10 7.2"><path d="M2.10 2.10 L5.00 5.10 L7.90 2.10" fill="none" stroke="#A5ADBA" stroke-width="2.2" stroke-linecap="round" stroke-linejoin="round"/></svg>
<div class="t" style="left:949.00px;top:387.10px;font-size:14px;color:#0052CC;letter-spacing:0.325px;-webkit-text-stroke:0.55px #0052CC;">Clear All</div>
<div class="t" style="left:1318.00px;top:387.90px;font-size:14px;color:#42526E;transform-origin:1px 0;transform:scaleX(0.9964);letter-spacing:-0.030px;-webkit-text-stroke:0.55px #42526E;">Cancel</div>
<div style="position:absolute;left:1377px;top:378px;width:61px;height:32px;background:#0052CC;border-radius:3px;"></div>
<div class="t" style="left:1387.00px;top:387.60px;font-size:14px;color:#FFFFFF;letter-spacing:1.000px;-webkit-text-stroke:0.55px #FFFFFF;">Apply</div>
<div style="position:absolute;left:917px;top:183px;width:545px;height:241px;box-sizing:border-box;border:2.4px solid #FF0000;border-radius:13px;"></div>
</body></html>
